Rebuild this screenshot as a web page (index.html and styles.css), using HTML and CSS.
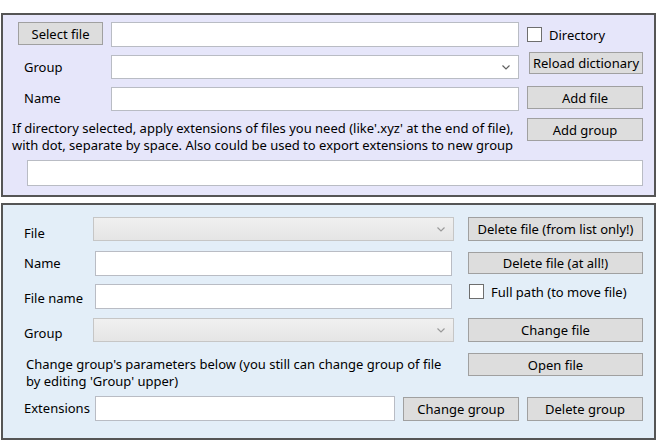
FILE: index.html
```html
<!DOCTYPE html>
<html>
<head>
<meta charset="utf-8">
<link rel="stylesheet" href="styles.css">
</head>
<body>
<div class="panel top">
  <button class="btn">Select file</button>
  <input class="tb" type="text">
  <div class="chk chk-dir"><span class="box"></span><span>Directory</span></div>

  <span class="lbl lbl-group">Group</span>
  <div class="combo combo-top"><svg class="arrow" width="8" height="5" viewBox="0 0 8 5"><polyline points="0.5,0.5 4,4 7.5,0.5" fill="none" stroke="#606060" stroke-width="1.2"/></svg></div>
  <button class="btn btn-reload">Reload dictionary</button>

  <span class="lbl">Name</span>
  <input class="tb tb-name" type="text">
  <button class="btn">Add file</button>

  <div class="note">If directory selected, apply extensions of files you need (like'.xyz' at the end of file),<br>with dot, separate by space. Also could be used to export extensions to new group</div>
  <button class="btn">Add group</button>

  <input class="tb tb-ext" type="text">
</div>

<div class="panel bottom">
  <div class="row row-a">
    <span class="lbl lbl-a">File</span>
    <div class="combo combo-dis"><svg class="arrow" width="8" height="5" viewBox="0 0 8 5"><polyline points="0.5,0.5 4,4 7.5,0.5" fill="none" stroke="#9a9a9a" stroke-width="1.2"/></svg></div>
    <button class="btn btn-side">Delete file (from list only!)</button>
  </div>
  <div class="row row-b">
    <span class="lbl">Name</span>
    <input class="tb tb-mid" type="text">
    <button class="btn btn-side btn-side2">Delete file (at all!)</button>
  </div>
  <div class="row row-c">
    <span class="lbl lbl-c">File name</span>
    <input class="tb tb-mid" type="text">
    <div class="chk chk-full"><span class="box"></span><span>Full path (to move file)</span></div>
  </div>
  <div class="row row-d">
    <span class="lbl lbl-d">Group</span>
    <div class="combo combo-dis"><svg class="arrow" width="8" height="5" viewBox="0 0 8 5"><polyline points="0.5,0.5 4,4 7.5,0.5" fill="none" stroke="#9a9a9a" stroke-width="1.2"/></svg></div>
    <button class="btn btn-side">Change file</button>
  </div>
  <div class="row row-e">
    <div class="note2">Change group's parameters below (you still can change group of file<br>by editing 'Group' upper)</div>
    <button class="btn btn-side btn-open">Open file</button>
  </div>
  <div class="row row-f">
    <span class="lbl lbl-f">Extensions</span>
    <input class="tb tb-exts" type="text">
    <button class="btn btn-grp">Change group</button>
    <button class="btn btn-grp">Delete group</button>
  </div>
</div>
</body>
</html>
```

FILE: styles.css
```css
body {
  margin: 0;
  padding: 13px 0 0 1px;
  background: #ffffff;
  font-family: "Noto Sans", "Open Sans", sans-serif;
  font-size: 13px;
  color: #000000;
}

.panel {
  box-sizing: border-box;
  width: 655px;
  border: 2px solid #555555;
}

.top {
  background: #e6e6fa;
  height: 184px;
  padding: 7px 0 0 15px;
  display: grid;
  grid-template-columns: 85px 408px 116px;
  grid-template-rows: 30px 34px 32px 42px 26px;
  column-gap: 8px;
  align-items: start;
}

.bottom {
  background: #e3eef8;
  margin-top: 6px;
  height: 237px;
  padding: 12px 0 0 21px;
}

.btn {
  box-sizing: border-box;
  margin: 0;
  padding: 0;
  height: 23px;
  background: #dddddd;
  border: 1px solid #a0a0a0;
  border-radius: 0;
  font-family: inherit;
  font-size: 13px;
  color: #000000;
  line-height: 20px;
  text-align: center;
}

.btn-reload {
  height: 22px;
  width: 114px;
  justify-self: end;
}

.tb {
  box-sizing: border-box;
  margin: 0;
  height: 25px;
  background: #ffffff;
  border: 1px solid #b9bcc4;
  border-radius: 0;
  font-family: inherit;
  font-size: 13px;
  outline: none;
}

.tb-name {
  margin-top: 1px;
  height: 24px;
}

.tb-ext {
  grid-column: 1 / -1;
  margin-left: 9px;
  height: 26px;
}

.lbl {
  height: 24px;
  line-height: 24px;
  margin-left: 6px;
  white-space: nowrap;
}

.lbl-group {
  margin-top: 3px;
}

.combo {
  box-sizing: border-box;
  height: 24px;
  display: flex;
  align-items: center;
  justify-content: flex-end;
  padding-right: 8px;
}

.combo-top {
  margin-top: 3px;
  background: #ffffff;
  border: 1px solid #b9bcc4;
}

.combo-dis {
  width: 361px;
  background: linear-gradient(#f0f0f0, #e5e5e5);
  border: 1px solid #c6c6c6;
}

.arrow {
  display: block;
}

.chk {
  display: flex;
  align-items: center;
  white-space: nowrap;
}

.chk .box {
  box-sizing: border-box;
  width: 15px;
  height: 15px;
  background: #ffffff;
  border: 1px solid #6e6e6e;
  margin-right: 7px;
  flex: none;
}

.chk-dir {
  margin-top: 5px;
  height: 15px;
}

.note {
  grid-column: 1 / 3;
  margin: 2px 0 0 -6px;
  line-height: 17px;
  white-space: nowrap;
}

.row {
  display: flex;
  align-items: flex-start;
}

.row .lbl {
  width: 69px;
  margin-left: 0;
  flex: none;
}

.row-a { height: 34px; }
.row-b { height: 33px; }
.row-c { height: 34px; }
.row-d { height: 35px; }
.row-e { height: 43px; }
.row-f { height: 26px; }

.lbl-a { margin-top: 4px; }
.lbl-c { margin-top: 2px; }
.lbl-d { margin-top: 3px; }

.btn-side {
  width: 175px;
  height: 24px;
  margin-left: 14px;
}

.tb-mid {
  width: 357px;
  height: 25px;
  margin-left: 2px;
}

.btn-side2 {
  margin-left: 16px;
  margin-top: 1px;
  height: 22px;
}

.chk-full {
  margin-left: 17px;
  height: 15px;
}

.note2 {
  width: 442px;
  margin: 3px 0 0 2px;
  line-height: 17px;
  white-space: nowrap;
}

.btn-open {
  margin-left: 0;
  height: 23px;
}

.row-f .lbl {
  width: 71px;
}

.tb-exts {
  width: 300px;
  height: 25px;
}

.btn-grp {
  width: 116px;
  height: 24px;
  margin-left: 8px;
  margin-top: 1px;
}
```
